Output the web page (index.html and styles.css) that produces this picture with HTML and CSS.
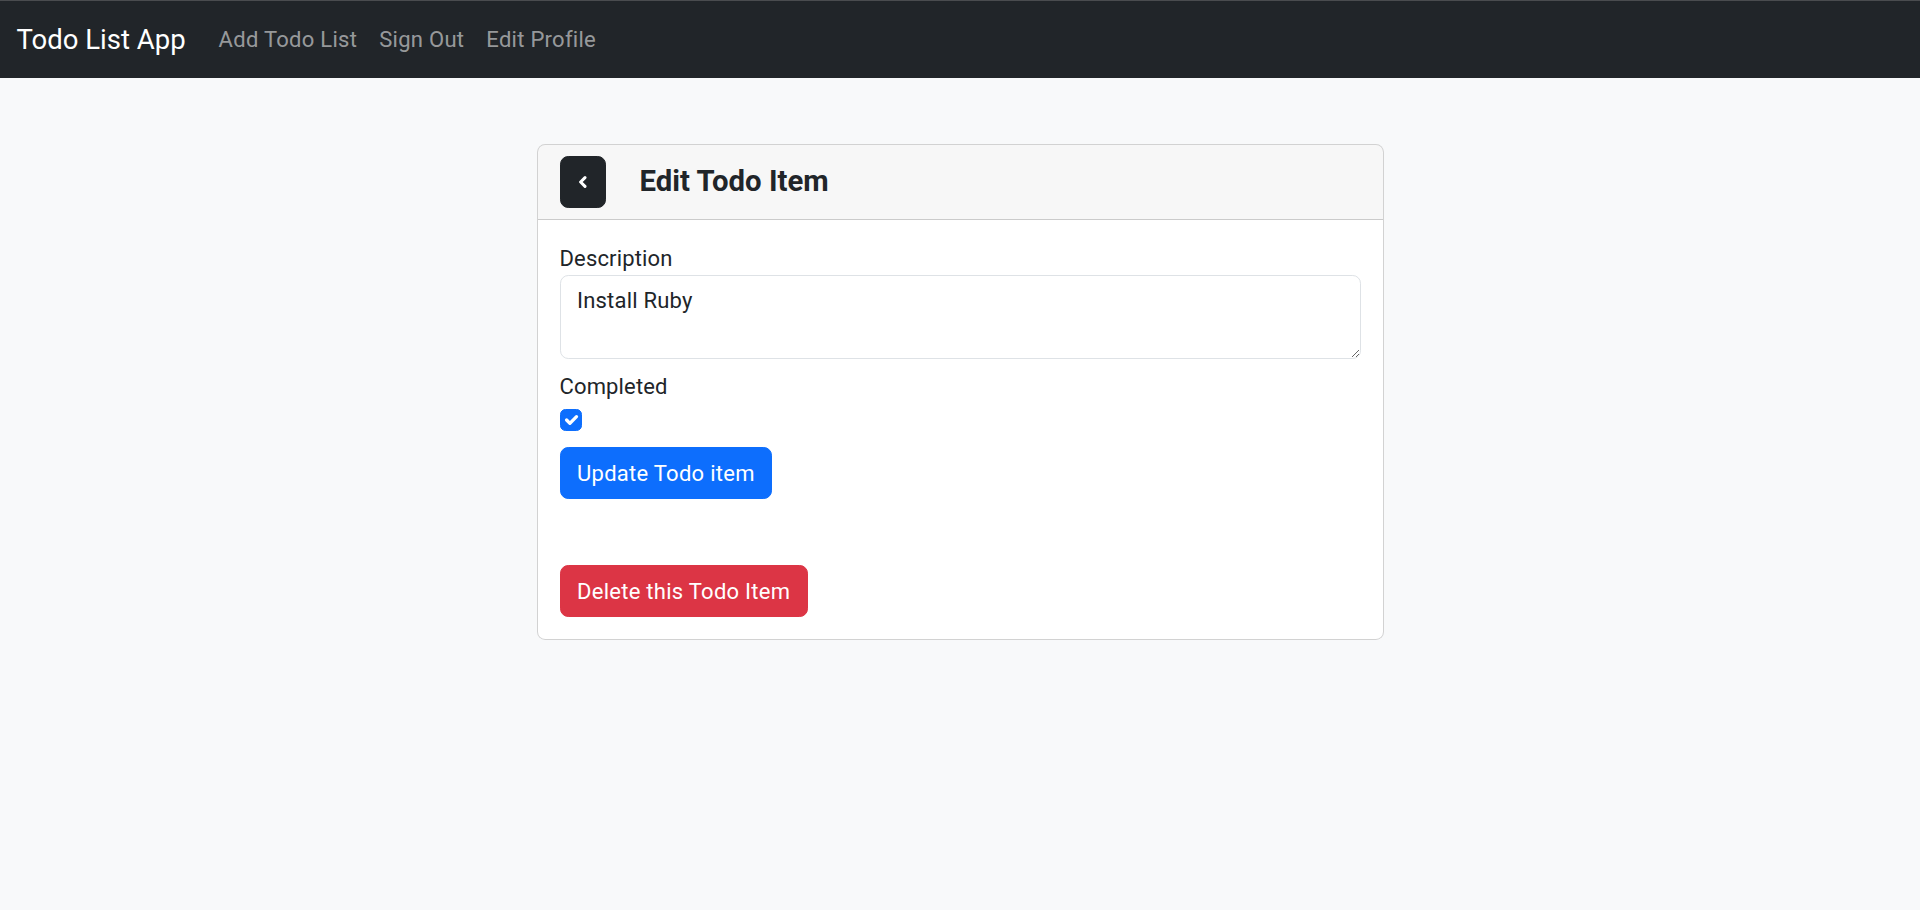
FILE: index.html
```html
<!DOCTYPE html>
<html lang="en">
<head>
<meta charset="utf-8">
<title>Todo List App</title>
<link rel="stylesheet" href="styles.css">
</head>
<body>
<nav class="navbar">
  <div class="navbar-inner">
    <a class="brand" href="#">Todo List App</a>
    <ul class="nav-links">
      <li><a class="nav-link" href="#">Add Todo List</a></li>
      <li><a class="nav-link" href="#">Sign Out</a></li>
      <li><a class="nav-link" href="#">Edit Profile</a></li>
    </ul>
  </div>
</nav>

<main class="page">
  <section class="card">
    <header class="card-header">
      <a class="btn btn-back" href="#" aria-label="Back">
        <svg class="chev" width="10" height="12" viewBox="0 0 10 12" aria-hidden="true">
          <polyline points="7,1.6 2.6,6 7,10.4" fill="none" stroke="#fff" stroke-width="3" stroke-linecap="round" stroke-linejoin="round"/>
        </svg>
      </a>
      <h5 class="card-title">Edit Todo Item</h5>
    </header>
    <div class="card-body">
      <form class="form">
        <label class="form-label" for="desc">Description</label>
        <textarea class="form-control" id="desc" rows="2">Install Ruby</textarea>
        <label class="form-label label-completed" for="done">Completed</label>
        <div class="check-row">
          <span class="check" id="done" role="checkbox" aria-checked="true">
            <svg width="22" height="22" viewBox="0 0 20 20" aria-hidden="true">
              <path d="m6 10 3 3 6-6" fill="none" stroke="#fff" stroke-width="3" stroke-linecap="round" stroke-linejoin="round"/>
            </svg>
          </span>
        </div>
        <button type="button" class="btn btn-primary">Update Todo item</button>
      </form>
      <button type="button" class="btn btn-danger btn-delete">Delete this Todo Item</button>
    </div>
  </section>
</main>
</body>
</html>
```

FILE: styles.css
```css
* { box-sizing: border-box; }

html, body { height: 100%; }

body {
  margin: 0;
  background: #f8f9fa;
  color: #212529;
  font-family: Roboto, "Open Sans", sans-serif;
  font-size: 22px;
  line-height: 1.5;
}

a { text-decoration: none; }

/* ---------- navbar ---------- */
.navbar {
  background: #212529;
  border-top: 1px solid #4a4c4f;
  padding: 11px 0;
}

.navbar-inner {
  display: flex;
  align-items: center;
  padding: 0 16.5px;
}

.brand {
  color: #fff;
  font-size: 27.5px;
  line-height: 41.25px;
  padding: 6.875px 0;
  margin-right: 22px;
}

.nav-links {
  display: flex;
  list-style: none;
  margin: 0;
  padding: 0;
}

.nav-link {
  display: block;
  color: rgba(255, 255, 255, 0.55);
  padding: 8px 11px;
  letter-spacing: 0.28px;
}

/* ---------- card ---------- */
.page {
  display: flex;
  justify-content: center;
  padding-top: 66px;
}

.card {
  width: 847px;
  background: #fff;
  border: 1px solid rgba(0, 0, 0, 0.175);
  border-radius: 8.25px;
  overflow: hidden;
}

.card-header {
  display: flex;
  align-items: center;
  padding: 11px 22px;
  background: rgba(0, 0, 0, 0.03);
  border-bottom: 1px solid rgba(0, 0, 0, 0.175);
}

.card-title {
  margin: 0 0 0 34px;
  font-size: 29.3px;
  font-weight: 700;
  line-height: 1.2;
  color: #212529;
}

.card-body {
  padding: 22px;
}

/* ---------- form ---------- */
.form { display: flex; flex-direction: column; align-items: flex-start; }

.form-label {
  display: block;
  letter-spacing: 0.15px;
}

.form-control {
  display: block;
  width: 100%;
  height: 84px;
  padding: 8.25px 16.5px;
  margin: 0 0 11px;
  font: inherit;
  letter-spacing: 0.2px;
  color: #212529;
  background: #fff;
  border: 1px solid #dee2e6;
  border-radius: 8.25px;
  resize: vertical;
}

.check-row {
  height: 33px;
  padding-top: 5.5px;
}

.check {
  display: block;
  width: 22px;
  height: 22px;
  background: #0d6efd;
  border: 1px solid #0d6efd;
  border-radius: 5.5px;
  position: relative;
}

.check svg {
  position: absolute;
  left: -1px;
  top: -1px;
}

/* ---------- buttons ---------- */
.btn {
  display: inline-flex;
  align-items: center;
  justify-content: center;
  height: 52px;
  padding: 0 16.5px;
  font: inherit;
  line-height: 33px;
  letter-spacing: 0.27px;
  border: 1px solid transparent;
  border-radius: 8.25px;
  cursor: pointer;
}

.btn-back {
  width: 46px;
  padding: 0;
  background: #212529;
  border-color: #212529;
}

.btn-primary {
  margin-top: 11px;
  color: #fff;
  background: #0d6efd;
  border-color: #0d6efd;
}

.btn-danger {
  color: #fff;
  background: #dc3545;
  border-color: #dc3545;
}

.btn-delete {
  margin-top: 66px;
}
```
